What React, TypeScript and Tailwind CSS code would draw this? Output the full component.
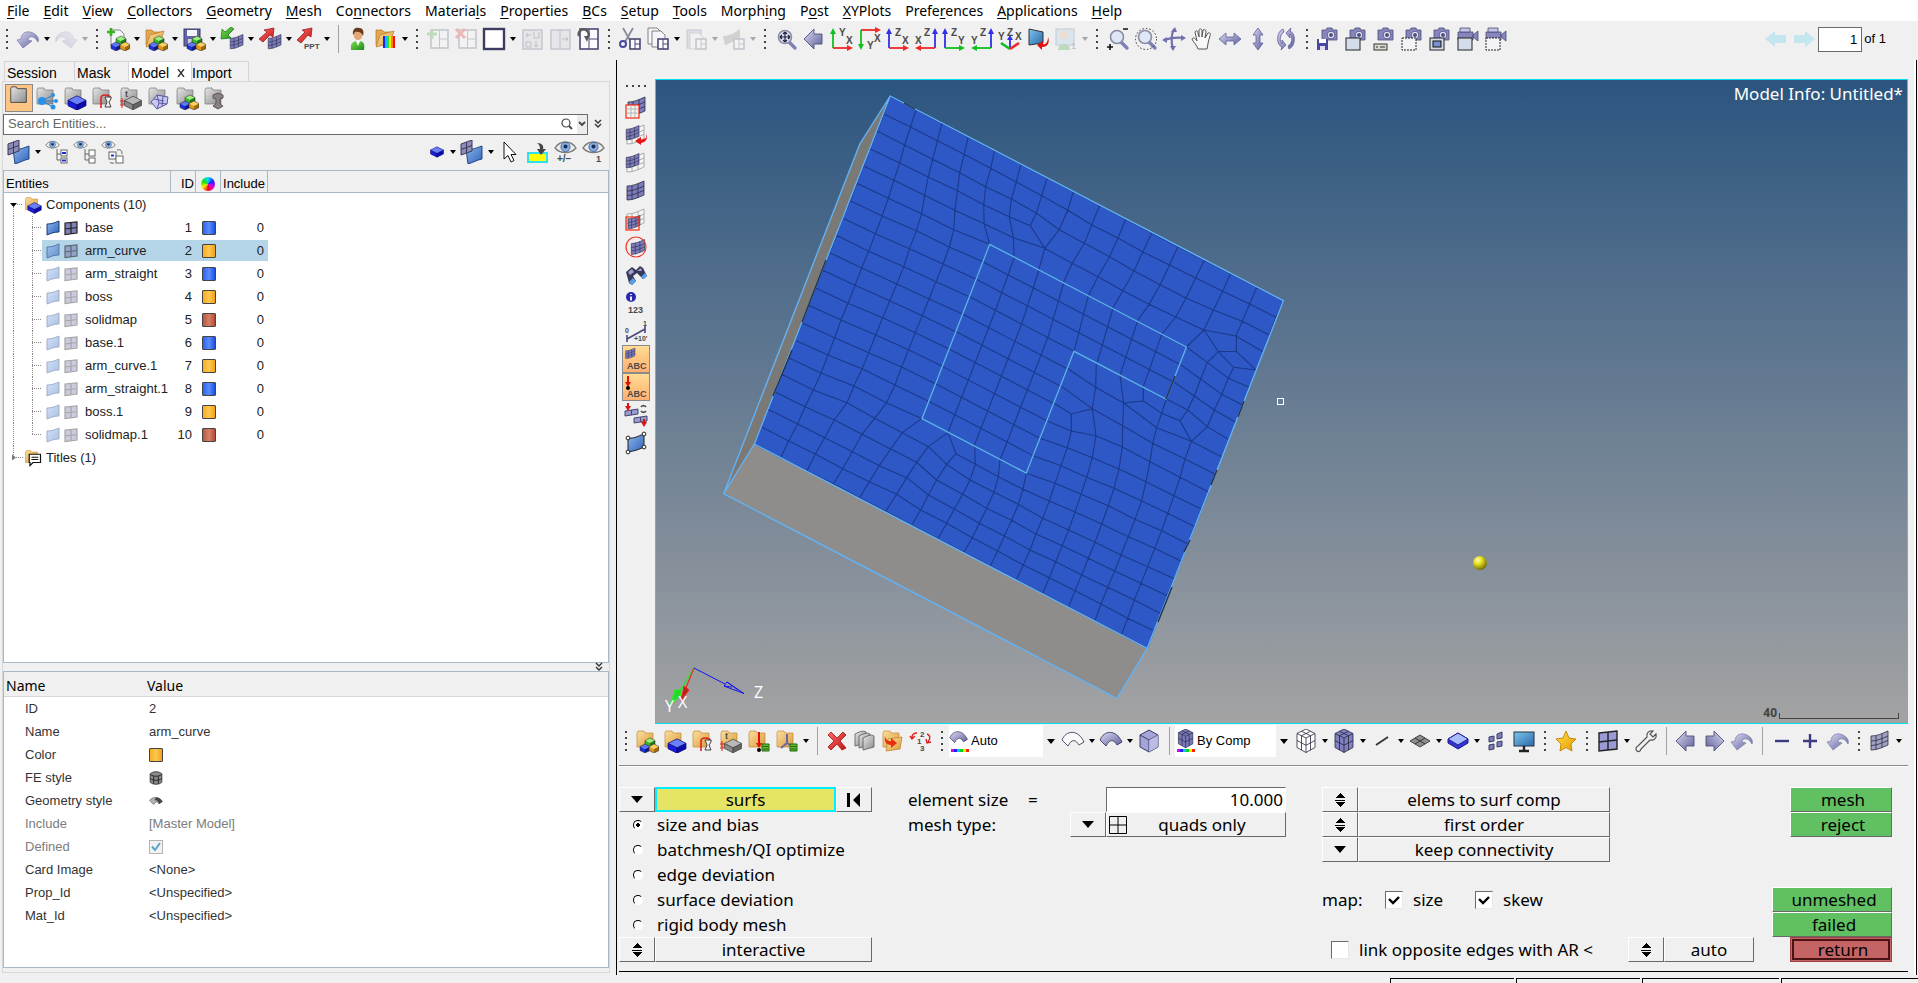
import type { ReactNode } from 'react';
import clsx from 'clsx';

type Pt = [number, number];

/* ---------- icon primitives ---------- */

function Icon({ children, faded, size = 'size-6' }: { children: ReactNode; faded?: boolean; size?: string }) {
  return (
    <svg viewBox="0 0 24 24" className={clsx('shrink-0', size, faded && 'opacity-25')} aria-hidden="true">
      {children}
    </svg>
  );
}

function Gradients() {
  const stops: [string, string, string][] = [
    ['tan', '#fbe0a0', '#dd9a3a'],
    ['gray', '#e6e6e6', '#8b8b8b'],
    ['steel', '#dcdcf4', '#5c5c98'],
    ['blue', '#8fb8f0', '#2e62b8'],
    ['screen', '#7fc4ee', '#2a6aa8'],
    ['gold', '#ffe24a', '#e89a00'],
    ['red', '#ff6a6a', '#c01414'],
    ['green', '#7be04a', '#1d8a1d'],
  ];
  return (
    <svg className="absolute size-0" aria-hidden="true">
      <defs>
        {stops.map(([id, a, b]) => (
          <linearGradient key={id} id={id} x1="0" y1="0" x2="1" y2="1">
            <stop offset="0" stopColor={a} />
            <stop offset="1" stopColor={b} />
          </linearGradient>
        ))}
        <radialGradient id="ball" cx="0.35" cy="0.3" r="0.8">
          <stop offset="0" stopColor="#ffffb0" />
          <stop offset="0.35" stopColor="#e8e020" />
          <stop offset="1" stopColor="#5c5800" />
        </radialGradient>
      </defs>
    </svg>
  );
}

function Cube({ x, y, top, left, right, s = 1 }: { x: number; y: number; top: string; left: string; right: string; s?: number }) {
  return (
    <g transform={`translate(${x} ${y}) scale(${s})`}>
      <path d="M0 -4 5 -1.5 0 1 -5 -1.5Z" fill={top} />
      <path d="M-5 -1.5 0 1V5L-5 2.5Z" fill={left} />
      <path d="M5 -1.5 0 1V5L5 2.5Z" fill={right} />
      <path d="M0 -4 5 -1.5V2.5L0 5-5 2.5V-1.5Z" fill="none" stroke="#222" strokeWidth=".5" />
    </g>
  );
}

// flat block used for components
function Gem({ x = 15, y = 16, gray, s = 1.7 }: { x?: number; y?: number; gray?: boolean; s?: number }) {
  return (
    <g transform={`translate(${x} ${y}) scale(${s})`} stroke={gray ? '#3a3a3a' : '#0a0a70'} strokeWidth=".4">
      <path d="M-5 -1.5 0 1V4L-5 1.5Z" fill={gray ? '#8a8a8a' : '#1c1ce0'} />
      <path d="M5 -1.5 0 1V4L5 1.5Z" fill={gray ? '#646464' : '#0a0ab0'} />
      <path d="M0 -4 5 -1.5 0 1 -5 -1.5Z" fill={gray ? '#b8b8b8' : '#6a80fa'} />
    </g>
  );
}

const Blocks = () => (
  <g>
    <Cube x={15} y={13} top="#9cf07c" left="#38b828" right="#1d7a18" />
    <Cube x={10} y={19} top="#5c78f8" left="#1a30d8" right="#0c1890" />
    <Cube x={19} y={19} top="#ffd060" left="#e09a18" right="#a06808" />
  </g>
);

const Folder = ({ tone = 'tan' }: { tone?: 'tan' | 'gray' }) => (
  <path d="M2 4 3 2H9L10 4H18V18H2Z" fill={tone === 'tan' ? 'url(#tan)' : 'url(#gray)'} stroke={tone === 'tan' ? '#c48a34' : '#777'} strokeWidth=".7" />
);

const OpenFolder = () => (
  <g stroke="#b87a24" strokeWidth=".7">
    <path d="M2 3H8L10 5H17V18H2Z" fill="#e0a850" />
    <path d="M2 20 6 8 20 4 16 16Z" fill="url(#tan)" />
  </g>
);

// curved mesh patch, 3 x 3 cells
const Sheet = ({ x = 0, y = 0, s = 1, fill = '#7c7cbc', line = '#2c2c48' }: { x?: number; y?: number; s?: number; fill?: string; line?: string }) => (
  <g transform={`translate(${x} ${y}) scale(${s})`} stroke={line} strokeWidth=".8">
    <path d="M3 7C9 7 13 5 20 2V16C13 19 9 21 3 21Z" fill={fill} />
    <path d="M3 12C9 12 13 10 20 7M3 16.500C9 16.500 13 14 20 11.500M8 6.700V20.700M14 4.600V18.600" fill="none" />
  </g>
);

// small element patch standing in front of a surface
const MeshOnSurf = () => (
  <g>
    <path d="M6 9C13 10 16 8 22 6V19C17 20 14 22 8 24Z" fill="url(#blue)" stroke="#173a78" strokeWidth=".9" />
    <path d="M1 4 12 0V11L1 15Z" fill="#8c8cb8" stroke="#3a3a58" />
    <path d="M6.500 2V13M1 9.500 12 5.500" stroke="#3a3a58" />
  </g>
);

const Win = ({ x = 3, y = 3, w = 17, h = 18 }: { x?: number; y?: number; w?: number; h?: number }) => (
  <g stroke="#4a4a74" strokeWidth="1.600" fill="#fafaff">
    <rect x={x} y={y} width={w} height={h} />
    <path d={`M${x + w / 2} ${y}V${y + h}M${x + w / 2} ${y + h / 2}H${x + w}`} strokeWidth="1" fill="none" />
  </g>
);

const Eye = ({ s = 1, y = 0 }: { s?: number; y?: number }) => (
  <g transform={`translate(0 ${y}) scale(${s})`}>
    <path d="M1 8C6 0 17 0 22 8 17 14 6 14 1 8Z" fill="#ececec" stroke="#7d7d7d" strokeWidth="1.400" />
    <circle cx="11.500" cy="7" r="4.600" fill="#86aee0" stroke="#3a5c94" strokeWidth=".8" />
    <circle cx="11.500" cy="6.500" r="2" fill="#1c2c54" />
  </g>
);

const Swirl = ({ flip }: { flip?: boolean }) => (
  <path
    transform={flip ? 'translate(24 0) scale(-1 1)' : undefined}
    d="M1 13 5 12C5 5 13 2 20 8 22 10 23 12 22 15 19 9 13 8 12 13L16 14 7 21Z"
    fill="url(#steel)" stroke="#7a7ab0" strokeWidth=".7"
  />
);

const FatArrow = ({ dir }: { dir: 'l' | 'r' }) => (
  <path transform={dir === 'r' ? 'translate(24 0) scale(-1 1)' : undefined} d="M2 12 12 2V7H20V17H12V22Z" fill="url(#steel)" stroke="#50507c" strokeWidth=".9" />
);

const Doc = ({ x = 3, y = 3 }: { x?: number; y?: number }) => (
  <path transform={`translate(${x} ${y})`} d="M0 0H9L13 4V16H0Z" fill="#f6f6fa" stroke="#777" strokeWidth=".9" />
);

const Lens = ({ children }: { children?: ReactNode }) => (
  <g>
    <path d="M15 15 21 21" stroke="#8080b4" strokeWidth="3.400" strokeLinecap="round" />
    <circle cx="11" cy="10" r="6.500" fill="#dfe6f6" stroke="#8c8ca4" strokeWidth="1.600" />
    {children}
  </g>
);

const Camera = () => (
  <g stroke="#4a4a78" strokeWidth=".8">
    <path d="M6 3H10L11 1H16L17 3H21V13H6Z" fill="#8686bc" />
    <circle cx="15" cy="8" r="3.800" fill="#e2e2f4" />
    <circle cx="15" cy="8" r="1.600" fill="#54548c" />
  </g>
);

const Video = () => (
  <g stroke="#4a4a78" strokeWidth=".8" fill="#8686bc">
    <path d="M2 5H17V13H2ZM17 8 22 4V14L17 10Z" />
    <path d="M4 1H14V5H4Z" fill="#c4c4e4" />
  </g>
);

const Curve = ({ fill = 'url(#steel)' }: { fill?: string }) => (
  <path d="M1 11C5 1 17 0 23 13L18 16C15 11 11 9 7 17Z" fill={fill} stroke="#3d3d64" strokeWidth=".9" />
);

const GridCube = ({ fill }: { fill: string }) => (
  <g stroke="#26263e" strokeWidth=".8">
    <path d="M12 0 21 4.500V18.500L12 23.500 3 18.500V4.500Z" fill={fill} />
    <path d="M3 4.500 12 9 21 4.500M12 9V23.500M7.500 6.700V21M16.500 6.700V21M7.500 2.300 16.500 6.700M16.500 2.300 7.500 6.700M3 11.500 12 16.300 21 11.500" fill="none" />
  </g>
);

const Spectrum = ({ y = 19 }: { y?: number }) => (
  <g>
    {['#e000e0', '#2020ff', '#00c8ff', '#00d020', '#f0f000', '#ff2000'].map((c, i) => (
      <rect key={c} x={2 + i * 3} y={y} width="3" height="3" fill={c} />
    ))}
  </g>
);

const RedDown = ({ x = 12, y = 2, l = 10 }: { x?: number; y?: number; l?: number }) => (
  <path d={`M${x - 1} ${y}h2v${l}h2l-3 5-3-5h2z`} fill="#e01010" />
);

const Bold = ({ x, y, size = 8, children }: { x: number; y: number; size?: number; children: string }) => (
  <text x={x} y={y} fontSize={size} fontWeight="700" fill="#4a4a4a" fontFamily="Liberation Sans, Arial, sans-serif">
    {children}
  </text>
);

interface AxesProps {
  corner: 'bl' | 'tl' | 'br';
  v: string;
  h: string;
}

const AXIS_COLOR: Record<string, string> = { X: '#f02828', Y: '#10c020', Z: '#3030e8' };

function Axes({ corner, v, h }: AxesProps) {
  const x0 = corner === 'br' ? 21 : 3;
  const dir = corner === 'br' ? -1 : 1;
  const y0 = corner === 'tl' ? 3 : 21;
  const up = corner === 'tl' ? 1 : -1;
  return (
    <Icon>
      <path d={`M${x0} ${y0}v${up * 15}`} stroke={AXIS_COLOR[v]} strokeWidth="1.800" />
      <path d={`M${x0 - 3} ${y0 + up * 14}h6l-3 ${up * 6}z`} fill={AXIS_COLOR[v]} />
      <path d={`M${x0} ${y0}h${dir * 15}`} stroke={AXIS_COLOR[h]} strokeWidth="1.800" />
      <path d={`M${x0 + dir * 14} ${y0 - 3}v6l${dir * 6} -3z`} fill={AXIS_COLOR[h]} />
      <Bold x={corner === 'br' ? 10 : 9} y={corner === 'tl' ? 22 : 9} size={10}>{v}</Bold>
      <Bold x={corner === 'br' ? 1 : 16} y={corner === 'tl' ? 15 : 17} size={10}>{h}</Bold>
    </Icon>
  );
}

/* ---------- toolbar parts ---------- */

const Caret = ({ faded }: { faded?: boolean }) => (
  <span className={clsx('w-2.5 flex justify-center', faded && 'opacity-30')}>
    <svg viewBox="0 0 6 4" className="w-1.5 h-1"><path d="M0 0H6L3 4Z" /></svg>
  </span>
);

function Tool({ label, caret, faded, children }: { label: string; caret?: boolean; faded?: boolean; children: ReactNode }) {
  return (
    <button type="button" aria-label={label} className="flex items-center shrink-0 h-7">
      <span className="w-7 flex justify-center">{children}</span>
      {caret && <Caret faded={faded} />}
    </button>
  );
}

const Grip = () => (
  <span className="w-3.5 shrink-0 flex flex-col items-center gap-1">
    {[0, 1, 2, 3].map(i => <span key={i} className="size-0.5 bg-[#444]" />)}
  </span>
);

const Sep = () => <span className="w-3 shrink-0 flex justify-center"><span className="w-px h-7 bg-[#a0a0a0]" /></span>;

/* ---------- menu + main toolbar ---------- */

const MENUS = [
  '_File', '_Edit', '_View', '_Collectors', '_Geometry', '_Mesh', 'Co_nnectors', 'Materia_ls', '_Properties', '_BCs',
  '_Setup', '_Tools', 'Morph_ing', 'P_ost', '_XYPlots', 'Prefe_rences', '_Applications', '_Help',
];

function MenuBar() {
  return (
    <nav className="h-[21px] shrink-0 bg-white flex items-center gap-3.5 pl-[7px] text-[14px] leading-5 font-['Noto_Sans','Open_Sans',sans-serif]">
      {MENUS.map(m => {
        const [pre, rest] = m.split('_');
        return (
          <button key={m} type="button">
            {pre}<span className="underline underline-offset-2">{rest[0]}</span>{rest.slice(1)}
          </button>
        );
      })}
    </nav>
  );
}

function MainToolbar() {
  return (
    <div className="h-9 shrink-0 flex items-center pr-8">
      <Grip />
      <Tool label="Undo" caret><Icon><Swirl /></Icon></Tool>
      <Tool label="Redo" caret faded><Icon faded><Swirl flip /></Icon></Tool>
      <Grip />
      <Tool label="New model" caret><Icon><Doc x={5} y={3} /><path d="M5 1V9M1 5H9" stroke="#38b020" strokeWidth="2.600" /><Blocks /></Icon></Tool>
      <Tool label="Open model" caret><Icon><OpenFolder /><Blocks /></Icon></Tool>
      <Tool label="Save model" caret>
        <Icon>
          <rect x="2" y="2" width="16" height="17" fill="#6464a8" stroke="#3a3a6c" />
          <rect x="5" y="3" width="10" height="6" fill="#f2f2fa" />
          <rect x="6" y="12" width="8" height="7" fill="#cfcfe6" />
          <Blocks />
        </Icon>
      </Tool>
      <Tool label="Import" caret><Icon><Sheet x={8} y={6} s={0.75} /><path d="M14 2 8 8 11 11 1 12 2 2 5 5 11 0Z" fill="url(#green)" stroke="#14701a" strokeWidth=".7" /></Icon></Tool>
      <Tool label="Export" caret><Icon><Sheet x={8} y={6} s={0.75} /><path d="M1 12 9 5 6 3 16 1 15 10 12 8 5 15Z" fill="url(#red)" stroke="#901010" strokeWidth=".7" /></Icon></Tool>
      <Tool label="Export to PPT" caret><Icon><path d="M1 13 9 5 6 3 16 1 15 10 12 8 5 16Z" fill="url(#red)" stroke="#901010" strokeWidth=".7" /><Bold x={8} y={22} size={8}>PPT</Bold></Icon></Tool>
      <Sep />
      <Tool label="User profiles"><Icon><path d="M5 23C4 16 7 14 12 14 18 14 19 17 18 23Z" fill="url(#green)" /><path d="M10 14 12 19 14 14Z" fill="#fff" /><ellipse cx="12" cy="7.500" rx="4.400" ry="5.500" fill="#e2a878" /><path d="M7 8C6 1 11 0 13 1 18 1 18 6 17 9 16 5 12 4 9 5Z" fill="#6a3a1c" /></Icon></Tool>
      <Tool label="Results" caret>
        <Icon>
          <OpenFolder />
          {['#2020ff', '#00c8ff', '#30e020', '#f8f000', '#ff8000', '#f01010'].map((c, i) => <rect key={c} x={9 + i * 2} y="9" width="2" height="12" fill={c} />)}
        </Icon>
      </Tool>
      <Grip />
      <Tool label="Add page"><Icon faded><Win x={5} /><path d="M6 2V12M1 7H11" stroke="#30a020" strokeWidth="3" /></Icon></Tool>
      <Tool label="Delete page"><Icon faded><Win x={5} /><path d="M2 2 11 11M11 2 2 11" stroke="#e01010" strokeWidth="3" /></Icon></Tool>
      <Tool label="Page layout" caret><Icon><rect x="2" y="2" width="20" height="20" fill="#fff" stroke="#3c3c60" strokeWidth="2.400" /></Icon></Tool>
      <Tool label="Swap windows"><Icon faded><rect x="3" y="3" width="19" height="19" fill="#ccccdc" stroke="#54547c" strokeWidth="1.600" /><path d="M6 8H11M6 8 8 6M6 8 8 10M14 5V11H19V5M16 14V20M14 18 16 20 18 18M6 15H11V20H6Z" fill="none" stroke="#333" /></Icon></Tool>
      <Tool label="Expand window"><Icon faded><rect x="3" y="3" width="19" height="19" fill="#ccccdc" stroke="#54547c" strokeWidth="1.600" /><path d="M12 3V22M14 12H20M18 10 20 12 18 14" fill="none" stroke="#333" /></Icon></Tool>
      <Tool label="Sync windows"><Icon><Win x={4} y={2} w={18} h={20} /><path d="M3 9A5 5 0 1 1 11 11" fill="none" stroke="#5a5a5a" strokeWidth="2.600" /><path d="M8 9 13 9 11 15Z" fill="#5a5a5a" /></Icon></Tool>
      <Grip />
      <Tool label="Cut"><Icon><path d="M5 1 13 15M15 1 7 15" stroke="#8a8a9a" strokeWidth="1.800" /><circle cx="5" cy="17" r="3" fill="none" stroke="#4848a0" strokeWidth="2" /><Win x={12} y={12} w={10} h={10} /></Icon></Tool>
      <Tool label="Copy" caret><Icon><Doc x={2} y={1} /><Doc x={6} y={4} /><Win x={12} y={12} w={10} h={10} /></Icon></Tool>
      <Tool label="Paste" caret faded><Icon faded><rect x="3" y="3" width="14" height="18" fill="#a8a8dc" stroke="#555" /><Doc x={6} y={6} /><Win x={12} y={12} w={10} h={10} /></Icon></Tool>
      <Tool label="Overlay" caret faded><Icon faded><path d="M1 9C8 9 12 6 18 2V11C12 13 8 17 3 18Z" fill="#777" /><Win x={12} y={12} w={10} h={10} /></Icon></Tool>
      <Grip />
      <Tool label="Fit"><Icon><Lens><path d="M11 5V15M6 10H16M11 5 9 7M11 5 13 7M11 15 9 13M11 15 13 13M6 10 8 8M6 10 8 12M16 10 14 8M16 10 14 12" stroke="#20203c" strokeWidth="1.200" /></Lens></Icon></Tool>
      <Tool label="Previous view"><Icon><FatArrow dir="l" /></Icon></Tool>
      <Tool label="XY top view"><Axes corner="bl" v="Y" h="X" /></Tool>
      <Tool label="XY bottom view"><Axes corner="tl" v="Y" h="X" /></Tool>
      <Tool label="XZ left view"><Axes corner="bl" v="Z" h="X" /></Tool>
      <Tool label="XZ right view"><Axes corner="br" v="Z" h="X" /></Tool>
      <Tool label="YZ rear view"><Axes corner="bl" v="Z" h="Y" /></Tool>
      <Tool label="YZ front view"><Axes corner="br" v="Z" h="Y" /></Tool>
      <Tool label="Isometric view">
        <Icon>
          <path d="M12 21V11" stroke="#3030e8" strokeWidth="1.800" /><path d="M9 13 12 8 15 13Z" fill="#3030e8" />
          <path d="M12 22 3 16" stroke="#10c020" strokeWidth="2.600" /><path d="M12 22 21 16" stroke="#f02828" strokeWidth="2.600" />
          <Bold x={0} y={13} size={10}>Y</Bold><Bold x={9} y={9} size={10}>Z</Bold><Bold x={17} y={13} size={10}>X</Bold>
        </Icon>
      </Tool>
      <Tool label="Capture view"><Icon><path d="M3 2 17 5V16L3 18Z" fill="url(#screen)" stroke="#333" /><path d="M22 10C22 17 18 18 17 17V14L11 18 16 23V20C22 20 24 15 22 10Z" fill="#e01010" /></Icon></Tool>
      <Tool label="Saved views" caret faded><Icon faded><rect x="2" y="2" width="18" height="16" fill="#9ac8e8" stroke="#557" /><circle cx="10" cy="8" r="4" fill="#e2a878" /><path d="M4 23C4 15 16 15 16 23Z" fill="#2a9a2a" /><Bold x={17} y={22} size={9}>1</Bold></Icon></Tool>
      <Grip />
      <Tool label="Zoom in or out"><Icon><Lens /><path d="M17 2H22M1 20H7M4 17V23" stroke="#111" strokeWidth="1.600" /></Icon></Tool>
      <Tool label="Circle zoom"><Icon><Lens /><circle cx="12" cy="12" r="10.500" fill="none" stroke="#333" strokeDasharray="1.500 2" /></Icon></Tool>
      <Tool label="Rotate"><Icon><path d="M12 2C9 8 9 15 11 22M2 13C8 11 15 10 22 11" fill="none" stroke="#7070ac" strokeWidth="2.200" /><path d="M9 5 13 0 15 5ZM8 19 14 19 11 24ZM5 10 5 16 0 13ZM19 8V14L24 11Z" fill="#7070ac" /></Icon></Tool>
      <Tool label="Pan"><Icon><path d="M8 22C7 18 3 15 2 12 3 10 5 11 7 14L5 5C6 3 8 4 8 6L9 10 9 3C10 1 12 2 12 4V10L13 3C15 2 16 3 16 5L15 11 18 6C20 5 21 7 20 9 18 14 18 18 17 22Z" fill="#f8f8f8" stroke="#555" strokeWidth="1" /></Icon></Tool>
      <Tool label="Pan horizontally"><Icon><path d="M1 12 8 6V10H16V6L23 12 16 18V14H8V18Z" fill="url(#steel)" stroke="#6060a0" strokeWidth=".8" /></Icon></Tool>
      <Tool label="Pan vertically"><Icon><path d="M12 1 17 8H14V16H17L12 23 7 16H10V8H7Z" fill="url(#steel)" stroke="#6060a0" strokeWidth=".8" /></Icon></Tool>
      <Tool label="Spin"><Icon><path d="M9 2C2 5 2 18 8 20L7 23 12 18 8 13 8 17C5 14 6 7 10 5ZM15 22C22 19 22 6 16 4L17 1 12 6 16 11 16 7C19 10 18 17 14 19Z" fill="url(#steel)" stroke="#6060a0" strokeWidth=".8" /></Icon></Tool>
      <Grip />
      <Tool label="Save image"><Icon><Camera /><rect x="1" y="12" width="11" height="11" fill="#4848a0" /><rect x="3" y="12" width="7" height="4" fill="#fff" /><rect x="4" y="19" width="5" height="4" fill="#dde" /></Icon></Tool>
      <Tool label="Capture window"><Icon><Camera /><rect x="2" y="11" width="14" height="12" fill="#d4dcea" stroke="#222" /></Icon></Tool>
      <Tool label="Capture toolbar"><Icon><Camera /><rect x="2" y="17" width="13" height="6" fill="#d8dcd0" stroke="#333" /><path d="M4 20H6M8 20H13" stroke="#333" /></Icon></Tool>
      <Tool label="Capture area"><Icon><Camera /><rect x="2" y="11" width="14" height="12" fill="#f4f4f8" stroke="#222" strokeDasharray="2 1" /></Icon></Tool>
      <Tool label="Capture graphics"><Icon><Camera /><rect x="2" y="11" width="14" height="12" fill="#d4dcea" stroke="#222" /><rect x="5" y="14" width="8" height="6" fill="#7890d0" stroke="#111" /></Icon></Tool>
      <Tool label="Record window"><Icon><Video /><rect x="2" y="11" width="14" height="12" fill="#d4dcea" stroke="#222" /></Icon></Tool>
      <Tool label="Record area"><Icon><Video /><rect x="2" y="11" width="14" height="12" fill="#f4f4f8" stroke="#222" strokeDasharray="2 1" /></Icon></Tool>
      <div className="ml-auto flex items-center font-['Liberation_Sans',Arial,sans-serif] text-[13px]">
        {(['l', 'r'] as const).map(d => (
          <button key={d} type="button" aria-label={d === 'l' ? 'Previous page' : 'Next page'} className="w-7 flex justify-center">
            <Icon><path transform={d === 'r' ? 'translate(24 0) scale(-1 1)' : undefined} d="M1 12 11 4V8H22V16H11V20Z" fill="#c4e6ee" /></Icon>
          </button>
        ))}
        <input aria-label="Page" defaultValue="1" className="w-11 h-[25px] mr-0.5 bg-white border border-[#6a6a6a] text-right pr-1" />
        <span>of 1</span>
      </div>
    </div>
  );
}

/* ---------- model browser ---------- */

const COLORS = {
  blue: 'bg-linear-to-r from-[#2c62f0] via-[#5c8cff] to-[#1c4ee0]',
  orange: 'bg-linear-to-r from-[#f8ac1c] via-[#ffc850] to-[#f0a010]',
  brown: 'bg-linear-to-r from-[#b45840] via-[#d88068] to-[#b04c34]',
};

type Color = keyof typeof COLORS;

const COMPONENTS: { id: number; name: string; color: Color }[] = [
  { id: 1, name: 'base', color: 'blue' },
  { id: 2, name: 'arm_curve', color: 'orange' },
  { id: 3, name: 'arm_straight', color: 'blue' },
  { id: 4, name: 'boss', color: 'orange' },
  { id: 5, name: 'solidmap', color: 'brown' },
  { id: 6, name: 'base.1', color: 'blue' },
  { id: 7, name: 'arm_curve.1', color: 'orange' },
  { id: 8, name: 'arm_straight.1', color: 'blue' },
  { id: 9, name: 'boss.1', color: 'orange' },
  { id: 10, name: 'solidmap.1', color: 'brown' },
];

const Swatch = ({ color }: { color: Color }) => (
  <span className={clsx('block size-3.5 border border-[#444] rounded-[1px]', COLORS[color])} />
);

const Guide = ({ last }: { last: boolean }) => (
  <svg className="w-[38px] h-[23px] shrink-0" viewBox="0 0 38 23" aria-hidden="true">
    <path d={`M9.500 0V23M28.500 0V${last ? 11 : 23}M28 11.500H37`} stroke="#888" strokeDasharray="1 1" fill="none" />
  </svg>
);

function EntityTree() {
  const th = 'border-r border-b border-[#aab7c4] font-normal h-[22px] p-0 pt-1';
  return (
    <div className="flex-1 min-h-0 bg-white border border-[#aab7c4]">
      <table className="w-full table-fixed border-separate border-spacing-0">
        <thead className="bg-[#f0f0f0]">
          <tr>
            <th className={clsx(th, 'w-[167px] text-left pl-0.5')}>Entities</th>
            <th className={clsx(th, 'w-[25px] text-right pr-px')}>ID</th>
            <th className={clsx(th, 'w-[25px]')} aria-label="Color">
              <span className="block mx-auto size-3.5 rounded-full bg-[conic-gradient(#00e0ff,#2020ff,#e000e0,#ff0020,#f8f000,#10e010,#00e0ff)]" />
            </th>
            <th className={clsx(th, 'w-[47px]')}>Include</th>
            <th className="border-b border-[#aab7c4]" />
          </tr>
        </thead>
        <tbody className="text-[#222]">
          <tr>
            <td colSpan={5} className="p-0">
              <div className="flex items-center h-[23px]">
                <svg className="w-5 h-[23px]" viewBox="0 0 20 23"><path d="M6 10H13L9.500 14Z" /><path d="M9.500 14V23M13 11.500H19" stroke="#888" strokeDasharray="1 1" /></svg>
                <Icon size="size-[18px]"><Folder /><Gem x={14} y={16} s={1.8} /></Icon>
                <span className="pl-1">Components (10)</span>
              </div>
            </td>
          </tr>
          {COMPONENTS.map((c, i) => {
            const cell = clsx('h-[21px] flex items-center', c.id === 2 && 'bg-[#b4d5e8]');
            return (
              <tr key={c.id}>
                <td className="p-0">
                  <div className="flex items-center h-[23px]">
                    <Guide last={i === COMPONENTS.length - 1} />
                    <div className={clsx(cell, 'flex-1 gap-1 pl-[3px] whitespace-nowrap')}>
                      <span className={clsx('flex gap-0.5 w-9', c.id === 2 ? 'opacity-60' : c.id > 1 && 'opacity-40')}>
                        <svg viewBox="0 0 16 16" className="size-4"><path d="M2 4C7 4 9 3 14 1V12C9 12 7 13 2 15Z" fill="url(#blue)" stroke="#173a78" /></svg>
                        <svg viewBox="0 0 16 16" className="size-4"><path d="M2 3 14 2V13L2 14.500ZM8 2V14M2 9 14 7.500" fill="#8080b4" stroke="#222" strokeWidth="1.200" /></svg>
                      </span>
                      {c.name}
                    </div>
                  </div>
                </td>
                <td className="p-0"><div className={clsx(cell, 'justify-end pr-1')}>{c.id}</div></td>
                <td className="p-0"><div className={clsx(cell, 'justify-center')}><Swatch color={c.color} /></div></td>
                <td className="p-0"><div className={clsx(cell, 'justify-end pr-1')}>0</div></td>
                <td />
              </tr>
            );
          })}
          <tr>
            <td colSpan={5} className="p-0">
              <div className="flex items-center h-[23px]">
                <svg className="w-5 h-[23px]" viewBox="0 0 20 23"><path d="M9.500 0V11M10 11.500H19" stroke="#888" strokeDasharray="1 1" /><path d="M8 8.500 12 11.500 8 14.500Z" fill="#777" /></svg>
                <Icon size="size-[18px]"><Folder /><path d="M7 7H22V18H12L8 22V18H7Z" fill="#fff" stroke="#111" strokeWidth="1.600" /><path d="M10 11H19M10 14H19" stroke="#111" strokeWidth="1.400" /></Icon>
                <span className="pl-1">Titles (1)</span>
              </div>
            </td>
          </tr>
        </tbody>
      </table>
    </div>
  );
}

const PROPS: { name: string; value: ReactNode; muted?: boolean }[] = [
  { name: 'ID', value: '2' },
  { name: 'Name', value: 'arm_curve' },
  { name: 'Color', value: <Swatch color="orange" /> },
  { name: 'FE style', value: <Icon size="size-3.5"><path d="M2 5C6 0 18 0 22 5V19C18 24 6 24 2 19Z" fill="#8a8a8a" stroke="#333" strokeWidth="1.500" /><path d="M2 6C8 10 16 10 22 6M2 13C8 17 16 17 22 13M8 9V22M16 9V22" stroke="#222" strokeWidth="1.600" fill="none" /></Icon> },
  { name: 'Geometry style', value: <Icon size="size-3.5"><path d="M1 11C6 4 18 4 23 13L17 17C15 12 12 12 8 18Z" fill="#b4b4b4" stroke="#444" /><path d="M12 6C18 6 21 9 23 13L17 17C16 12 14 10 9 11Z" fill="#444" /></Icon> },
  { name: 'Include', value: '[Master Model]', muted: true },
  {
    name: 'Defined',
    value: (
      <span className="relative block size-3.5">
        <input type="checkbox" aria-label="Defined" defaultChecked disabled className="block size-3.5 appearance-none bg-[#f2f2f2] border border-[#b4b4b4]" />
        <svg viewBox="0 0 14 14" className="absolute inset-0 pointer-events-none"><path d="M3 6.500 6 10 11 3" fill="none" stroke="#5aa4cc" strokeWidth="2" /></svg>
      </span>
    ),
    muted: true,
  },
  { name: 'Card Image', value: '<None>' },
  { name: 'Prop_Id', value: '<Unspecified>' },
  { name: 'Mat_Id', value: '<Unspecified>' },
];

function PropertyTable() {
  return (
    <div className="h-[297px] shrink-0 bg-white border border-[#aab7c4]">
      <table className="w-full table-fixed border-separate border-spacing-0">
        <thead className="bg-[#f0f0f0] font-['Noto_Sans','Open_Sans',sans-serif] text-[14px]">
          <tr className="text-left">
            <th className="w-[143px] h-[25px] p-0 pt-1 pl-0.5 font-normal border-b border-[#d4d8dc]">Name</th>
            <th className="h-[25px] p-0 pt-1 font-normal border-b border-[#d4d8dc]">Value</th>
          </tr>
        </thead>
        <tbody>
          {PROPS.map(p => (
            <tr key={p.name} className={p.muted ? 'text-[#7c7c7c]' : 'text-[#333]'}>
              <td className="h-[23px] p-0 pl-[21px]">{p.name}</td>
              <td className="h-[23px] p-0 pl-0.5">{p.value}</td>
            </tr>
          ))}
        </tbody>
      </table>
    </div>
  );
}

const Chevrons = () => (
  <svg viewBox="0 0 8 10" className="w-2 h-2.5"><path d="M1 1 4 4 7 1M1 5 4 8 7 5" fill="none" stroke="#333" strokeWidth="1.400" /></svg>
);

function EyeTree({ variant }: { variant: number }) {
  return (
    <Icon>
      <Eye s={0.65} y={0} />
      {variant < 2 ? (
        <g>
          <path d="M12 9V20H16M12 14H16" fill="none" stroke="#666" />
          <rect x="16" y="10" width="6" height="6" fill="#fff" stroke="#666" /><rect x="16" y="18" width="6" height="5" fill="#fff" stroke="#666" />
          {variant === 0 && <path d="M17 13H21M17 20.500H21" stroke="#2030d8" strokeWidth="2" />}
        </g>
      ) : (
        <g>
          <rect x="8" y="12" width="7" height="7" fill="#fff" stroke="#666" /><path d="M10 15.500H13" stroke="#2030d8" strokeWidth="2" />
          <rect x="15" y="16" width="7" height="7" fill="#fff" stroke="#666" /><path d="M16 10C20 9 21 11 21 14M9 22C10 24 12 23 13 23" fill="none" stroke="#666" />
        </g>
      )}
    </Icon>
  );
}

function Browser() {
  const tab = 'h-5 flex items-center border-t border-r border-[#d4d4d4] pt-0.5';
  return (
    <aside className="w-[617px] shrink-0 mt-[3px] border-r border-black pl-0.5 pr-1.5 flex flex-col font-['Liberation_Sans',Arial,sans-serif] text-[13px] leading-4">
      <div className="flex items-end text-[14px] h-[21px] pl-0.5">
        <button type="button" className={clsx(tab, 'border-l pl-0.5 w-[71px]')}>Session</button>
        <button type="button" className={clsx(tab, 'pl-0.5 w-[54px]')}>Mask</button>
        <div className={clsx(tab, 'bg-white pl-0.5 w-[63px] justify-between pr-1.5')}>
          <button type="button">Model</button>
          <button type="button" aria-label="Close Model">
            <svg viewBox="0 0 8 8" className="size-2"><path d="M1 0 7 8M7 0 1 8" stroke="#333" strokeWidth="1.400" /></svg>
          </button>
        </div>
        <button type="button" className={clsx(tab, 'w-[57px]')}>Import</button>
      </div>
      <div className="flex-1 min-h-0 border border-[#d8d8d8] flex flex-col pb-1 mb-0.5">
        <div className="flex h-8 items-center pl-0.5">
          <button type="button" aria-label="Model view" className="size-7 border border-[#8a8a8a] bg-[#ffc484] flex justify-center items-start"><Icon size="size-[22px]"><path d="M3 4 4 2H9L10 4H20V19H3Z" fill="url(#gray)" stroke="#444" /></Icon></button>
          <Tool label="Assembly"><Icon><Folder tone="gray" /><path d="M7 15 18 9M7 15H20M7 15 18 21" stroke="#2878c8" strokeWidth="1" />{([[7, 15, 4], [18, 9, 2], [21, 15, 2], [18, 21, 2.5]] as const).map(([x, y, r]) => <circle key={y} cx={x} cy={y} r={r} fill="#2890e8" />)}</Icon></Tool>
          <Tool label="Components view"><Icon><Folder tone="gray" /><Gem x={14} y={17} s={1.8} /></Icon></Tool>
          <Tool label="Materials view"><Icon><Folder tone="gray" /><path d="M10 22V12C10 8 18 8 20 12" fill="none" stroke="#e02020" strokeWidth="1.600" /><path d="M14 11H20V13L18 16 20 21H14L16 16Z" fill="#eee" stroke="#444" /></Icon></Tool>
          <Tool label="Properties view"><Icon><Folder tone="gray" /><Gem x={14} y={17} s={1.7} gray /><Bold x={6} y={11} size={9}>t</Bold><path d="M3 12V22M1 15H5M1 19H5" stroke="#e02020" /></Icon></Tool>
          <Tool label="Groups view"><Icon><Folder tone="gray" /><path d="M4 16 10 9 21 11 20 18 10 23Z" fill="#c8c8ee" stroke="#5858a0" /><path d="M10 9 12 17 10 23M12 17 20 18M16 10 15 20M7 13 17 15" stroke="#5858a0" fill="none" /></Icon></Tool>
          <Tool label="Includes view"><Icon><Folder tone="gray" /><Blocks /></Icon></Tool>
          <Tool label="Connectors view"><Icon><Folder tone="gray" /><path d="M10 9 15 7 20 9V12L17 13V18L20 20 15 23 10 20 13 18V13L10 12Z" fill="#8a8282" stroke="#5a5454" /></Icon></Tool>
        </div>
        <div className="flex items-center h-5 gap-1.5">
          <div className="w-[585px] h-[21px] flex items-center bg-white border border-[#6a6a6a]">
            <input aria-label="Search entities" placeholder="Search Entities..." className="flex-1 pl-1 outline-none placeholder:text-[#666]" />
            <svg viewBox="0 0 12 12" className="size-3"><circle cx="5" cy="5" r="4" fill="none" stroke="#444" strokeWidth="1.200" /><path d="M8 8 11 11" stroke="#444" strokeWidth="1.800" /></svg>
            <span className="w-2.5 h-full flex items-center justify-center bg-[#ececec] ml-1"><svg viewBox="0 0 8 6" className="w-2 h-1.5"><path d="M1 1 4 4 7 1" fill="none" stroke="#444" strokeWidth="1.800" /></svg></span>
          </div>
          <button type="button" aria-label="More search options"><Chevrons /></button>
        </div>
        <div className="flex items-center h-9 pl-0.5">
          <Tool label="Entity display" caret><Icon><MeshOnSurf /></Icon></Tool>
          <Tool label="Show all"><EyeTree variant={0} /></Tool>
          <Tool label="Hide all"><EyeTree variant={1} /></Tool>
          <Tool label="Reverse"><EyeTree variant={2} /></Tool>
          <div className="ml-auto flex pr-px">
            <Tool label="Component selector" caret><Icon><Gem x={15} y={12} s={1.3} /></Icon></Tool>
            <Tool label="Display selector" caret><Icon><MeshOnSurf /></Icon></Tool>
            <Tool label="Pick"><Icon><path d="M6 2V19L10 15.500 13 22 16 20.500 13 14.500H18Z" fill="#fff" stroke="#111" /></Icon></Tool>
            <Tool label="Add to panel"><Icon><rect x="2" y="13" width="19" height="9" fill="#ff0" stroke="#30e0f0" strokeWidth="2" /><path d="M11 3C16 3 18 6 17 9H20L15 15 11 9H14C14 6 13 4 11 3Z" fill="#444" /></Icon></Tool>
            <Tool label="Show or hide"><Icon><Eye /><Bold x={3} y={22} size={10}>+/−</Bold></Icon></Tool>
            <Tool label="Isolate"><Icon><Eye /><Bold x={14} y={22} size={9}>1</Bold></Icon></Tool>
          </div>
        </div>
        <EntityTree />
        <div className="h-2 flex justify-end items-center pr-1.5"><Chevrons /></div>
        <PropertyTable />
      </div>
    </aside>
  );
}

/* ---------- graphics area ---------- */

// Nodes of the structured blocks, one array per column.
const upperLeft: Pt[][] = [
  [[460, 48], [443, 102], [425, 153], [405, 206], [388, 258], [370, 310], [352, 362], [331, 414], [315, 466], [297, 518], [278, 571], [259, 624], [240, 676], [222, 729], [203, 781], [185, 833]],
  [[530, 89], [515, 141], [499, 195], [486, 249], [470, 301], [455, 355], [438, 408], [420, 461], [402, 514], [383, 564], [365, 616], [346, 670], [327, 720], [310, 773], [292, 825], [273, 879]],
  [[600, 130], [588, 182], [575, 238], [563, 291], [553, 346], [545, 401], [531, 452], [512, 506], [497, 560], [478, 612], [459, 662], [440, 713], [421, 765], [402, 818], [384, 866], [362, 918]],
  [[671, 171], [660, 223], [648, 278], [642, 332], [635, 391], [632, 449], [620, 501], [603, 552], [584, 605], [565, 657], [547, 707], [528, 758], [510, 809], [491, 861], [473, 915], [450, 968]],
  [[742, 212], [732, 265], [718, 320], [713, 374], [714, 431], [729, 493], [711, 545], [692, 598], [674, 650], [656, 702], [637, 755], [619, 807], [601, 859], [582, 911], [564, 964], [546, 1016]],
];

const upperRight: Pt[][] = [
  [[742, 212], [732, 265], [718, 320]],
  [[813, 253], [801, 306], [788, 357]],
  [[884, 294], [870, 347], [855, 399]],
  [[955, 335], [940, 391], [917, 449]],
  [[1026, 376], [1005, 435], [985, 490]],
  [[1097, 418], [1076, 474], [1053, 530]],
  [[1167, 459], [1143, 516], [1119, 573]],
  [[1238, 500], [1215, 555], [1190, 614]],
  [[1309, 541], [1286, 594], [1260, 654]],
  [[1380, 581], [1359, 634], [1334, 690]],
  [[1451, 622], [1432, 672], [1412, 724]],
  [[1523, 662], [1503, 712], [1485, 765]],
];

const upperLinks =
  'M713 374 782 410 839 437 878 505 952 550 1022 590 1089 632 1160 673 1232 711 1308 750 1395 768 1468 815' +
  'M714 431 793 473 878 505M788 357 782 410 793 473 795 532M855 399 839 437M917 449 878 505 862 569' +
  'M985 490 952 550 929 606M1053 530 1022 590 996 647M1119 573 1089 632 1062 684M1190 614 1160 673 1128 723' +
  'M1260 654 1232 711 1195 762M1334 690 1308 750M1412 724 1395 768';

const lower: Pt[][] = [
  [[-235, 223], [-256, 275], [-276, 328], [-296, 380], [-317, 432]],
  [[-140, 270], [-165, 320], [-187, 372], [-214, 423], [-238, 473]],
  [[-39, 308], [-77, 360], [-106, 413], [-134, 462], [-159, 512]],
  [[44, 355], [6, 403], [-23, 455], [-52, 506], [-80, 552]],
  [[127, 398], [92, 447], [58, 497], [28, 545], [-1, 593]],
  [[205, 440], [170, 487], [140, 533], [110, 583], [77, 634]],
  [[260, 493], [230, 540], [205, 585], [182, 630], [155, 675]],
  [[330, 540], [308, 583], [283, 627], [260, 670], [234, 716]],
  [[402, 577], [380, 625], [358, 670], [337, 713], [312, 757]],
  [[475, 613], [455, 661], [433, 708], [413, 753], [391, 798]],
  [[548, 655], [528, 702], [510, 750], [490, 795], [469, 839]],
  [[626, 690], [607, 737], [587, 785], [568, 833], [548, 880]],
  [[705, 727], [685, 775], [665, 825], [645, 872], [626, 921]],
  [[783, 765], [764, 813], [743, 862], [723, 912], [705, 962]],
  [[863, 800], [843, 850], [823, 900], [803, 955], [784, 1004]],
  [[943, 836], [923, 888], [903, 941], [882, 993], [862, 1045]],
];

const lowerRight: Pt[][] = [
  [[560, 362], [540, 415], [520, 467], [499, 520], [489, 568], [475, 613]],
  [[634, 393], [622, 443], [603, 497], [585, 550], [568, 603], [548, 655]],
  [[708, 407], [697, 473], [680, 532], [663, 583], [645, 636], [626, 690]],
  [[787, 441], [777, 507], [762, 565], [745, 617], [725, 672], [705, 727]],
  [[870, 485], [858, 545], [845, 603], [825, 658], [805, 710], [783, 765]],
  [[960, 532], [942, 587], [923, 640], [905, 692], [884, 745], [863, 800]],
  [[1046, 576], [1025, 628], [1005, 680], [984, 732], [964, 784], [943, 836]],
];

const lowerLinks =
  'M-117 219-140 270M-18 258-39 308M80 308 44 355M185 356 127 398M264 398 205 440M264 398 288 461 260 493' +
  'M288 461 346 493 415 530 489 568M344 438 346 493 330 540M420 479 415 530 402 577' +
  'M581 309 634 342 697 326M634 342V393M601 257 697 326 788 377 878 430 975 477 1066 523' +
  'M621 205 707 262 791 309 890 383 994 424 1086 471M709 190 707 262 697 326 708 407' +
  'M780 226 791 309 788 377 787 441M791 309 850 303V262M850 303 905 340 960 362 994 424 1042 380' +
  'M919 297 905 340 890 383 878 430 870 485M994 424 975 477 960 532M919 297 983 330 1042 380 1107 419M983 330 960 362' +
  'M940 245 1003 288 1063 330 1127 367M960 193 1022 237 1085 283 1148 315M979 141 1042 187 1105 235 1168 262' +
  'M979 141 1032 90 1075 155 1129 154V107M1129 154 1188 210 1121 202 1075 155 1042 187M1121 202 1105 235' +
  'M1042 187 1022 237 1003 288 983 330M1105 235 1085 283 1063 330 1042 380';

const line = (pts: Pt[]) => 'M' + pts.map(p => p.join(' ')).join('L');

function blockPath(cols: Pt[][]) {
  const rows = cols[0].map((_, r) => cols.map(c => c[r]));
  return [...cols, ...rows].map(line).join('');
}

// Bilinear grid between four corners: a-b is the first row, d-c the last.
function patchPath(a: Pt, b: Pt, c: Pt, d: Pt, nu: number, nv: number) {
  const mix = (p: Pt, q: Pt, t: number): Pt => [p[0] + (q[0] - p[0]) * t, p[1] + (q[1] - p[1]) * t];
  let out = '';
  for (let i = 0; i <= nu; i++) out += line([mix(a, b, i / nu), mix(d, c, i / nu)]);
  for (let j = 0; j <= nv; j++) out += line([mix(a, d, j / nv), mix(b, c, j / nv)]);
  return out;
}

const P1: Pt = [989.7, 244.3];
const P2: Pt = [1186.4, 347];
const P3: Pt = [1166.1, 399];
const P4: Pt = [1074, 351.3];
const P5: Pt = [1026.3, 473];
const P6: Pt = [922, 418.7];
const TOP_MID: Pt = [1088.4, 295.7];
const LEFT_MID: Pt = [969.3, 296.6];

function Model() {
  return (
    <svg viewBox="656 80 1251 642" preserveAspectRatio="xMinYMin meet" className="absolute inset-0 size-full" role="img" aria-label="Meshed block">
      <path d="M890.200 96 859.800 144 723.700 493.700 754.400 444Z" fill="#7b7976" />
      <path d="M754.400 444 1147.200 648.300 1116.900 698.300 723.700 493.700Z" fill="#8f8d8b" />
      <path d="M890.200 96 1283.400 300.700 1147.200 648.300 754.400 444Z" fill="#2d58c6" />
      <g fill="none" stroke="#1d3a8a" strokeWidth="1.100">
        <g transform="translate(720 80) scale(.3699 .33333)">
          <path vectorEffect="non-scaling-stroke" d={blockPath(upperLeft) + blockPath(upperRight) + upperLinks} />
        </g>
        <g transform="translate(860 300) scale(.33333)">
          <path vectorEffect="non-scaling-stroke" d={blockPath(lower) + blockPath(lowerRight) + lowerLinks} />
        </g>
        <path d={patchPath(P1, TOP_MID, P4, LEFT_MID, 4, 3) + patchPath(TOP_MID, P2, P3, P4, 4, 3) + patchPath(LEFT_MID, P4, P5, P6, 4, 7)} />
      </g>
      <g fill="none" stroke="#62b2f4" strokeWidth="1.400">
        <path d="M890.200 96 1283.400 300.700 1147.200 648.300 754.400 444ZM890.200 96 859.800 144 723.700 493.700 1116.900 698.300 1147.200 648.300M723.700 493.700 754.400 444" />
        <path d={line([P1, P2, P3, P4, P5, P6]) + 'Z'} stroke="#5cb4ea" />
        <path d="M1175 376 1166 399M826 260 802 322M792 350 773 396M1244 401 1238 417M1217 470 1211 485M1190 540 1184 552M1172 587 1158 622M904 103 915 109" stroke="#23324a" />
      </g>
      <g fill="none">
        <path d="M694 668 673 703" stroke="#30e030" strokeWidth="1.400" />
        <path d="M675 690 682 689 681 695 670 705Z" fill="#28d828" stroke="#30f030" />
        <path d="M694 668 681 700" stroke="#e03020" strokeWidth="1.200" />
        <path d="M684 686 689 690 686 694 681 701Z" fill="#b02818" stroke="#ff2020" />
        <path d="M694 668 725 684M727 682 724 686 744 693.500ZM727 682 738 690M724 686 732 687" stroke="#1414f0" />
      </g>
      <g fill="#fff" fontSize="16" fontFamily="Open Sans, Noto Sans, sans-serif">
        <text x="754" y="698">Z</text>
        <text x="678" y="708">X</text>
        <text x="665" y="712">Y</text>
      </g>
      <rect x="1277.500" y="398.500" width="6" height="6" fill="none" stroke="#fff" />
      <ellipse cx="1480" cy="563" rx="7" ry="7" fill="url(#ball)" />
    </svg>
  );
}

function Viewport() {
  return (
    <div className="relative flex-1 border border-[#00e0f0] bg-linear-to-b from-[#2b557f] to-[#a3a3a3] overflow-hidden">
      <Model />
      <p className="absolute top-1 right-1 text-white text-[17px] leading-5 font-['Noto_Sans',sans-serif]">Model Info: Untitled*</p>
      <div className="absolute bottom-0.5 right-2 flex items-end text-[#444] font-bold text-[12px] leading-4 font-['Noto_Sans',sans-serif]">
        40<span className="w-[120px] h-1.5 ml-0.5 mb-0.5 border border-t-0 border-[#444]" />
      </div>
    </div>
  );
}

function SideToolbar() {
  const on = 'size-7 border border-[#8a8a8a] bg-linear-to-b from-[#ffdc94] to-[#ffb070] flex justify-center items-center';
  return (
    <div className="w-[38px] shrink-0 flex flex-col items-center">
      <span className="h-3.5 flex items-center gap-1">{[0, 1, 2, 3].map(i => <span key={i} className="size-0.5 bg-[#444]" />)}</span>
      <Tool label="Mask"><Icon><Sheet x={1} /><rect x="2" y="10" width="13" height="13" fill="#f2f2f2" stroke="#f02a10" strokeWidth="1.200" /><path d="M3 14H14M3 18H14M7 11V22M11 11V22" stroke="#aaa" strokeWidth=".8" /></Icon></Tool>
      <Tool label="Unmask adjacent"><Icon><Sheet fill="#f4f4f4" line="#999" /><Sheet s={0.75} y={1} /><path d="M22 11V15L17 17V14L11 18 17 22V20C22 19 24 16 22 11Z" fill="#e81010" /></Icon></Tool>
      <Tool label="Unmask more"><Icon><Sheet fill="#f4f4f4" line="#999" /><Sheet s={0.75} y={1} /></Icon></Tool>
      <Tool label="Unmask all"><Icon><Sheet /></Icon></Tool>
      <Tool label="Mask outside"><Icon><Sheet fill="#f4f4f4" line="#999" /><Sheet x={2} y={7} s={0.7} /><rect x="2" y="10" width="13" height="13" fill="none" stroke="#f02a10" strokeWidth="1.200" /></Icon></Tool>
      <Tool label="Spherical clipping"><Icon><Sheet x={5} y={3} s={0.78} /><circle cx="12" cy="12" r="10" fill="none" stroke="#f03a28" strokeWidth="1.200" /></Icon></Tool>
      <Tool label="Find"><Icon><path d="M2 9 8 4 12 7 16 3 19 5 23 13 19 16 13 10 9 13 12 18 8 22 5 20Z" fill="#38385c" /><path d="M5 19 8 22 12 18 9 15ZM17 14 20 16 23 13 21 10Z" fill="#58a0e8" /><path d="M4 9 8 6 10 9 6 12ZM13 8 17 5 18 8Z" fill="#a0a0cc" /></Icon></Tool>
      <Tool label="Numbers"><Icon><circle cx="7" cy="6" r="5" fill="#2828b0" /><path d="M7 3V4M7 5.500V9.500" stroke="#fff" strokeWidth="1.800" /><Bold x={4} y={22} size={9}>123</Bold></Icon></Tool>
      <Tool label="Measure"><Icon><path d="M3 16V23M3 20 21 10M21 7V14" stroke="#484880" strokeWidth="1.600" /><Bold x={1} y={14} size={7}>0</Bold><Bold x={19} y={7} size={7}>1</Bold><Bold x={10} y={22} size={7}>+10'</Bold></Icon></Tool>
      <button type="button" aria-label="Element handles" className={on}><Icon><Sheet x={0} y={0} s={0.55} /><Bold x={3} y={22} size={9}>ABC</Bold></Icon></button>
      <button type="button" aria-label="Load handles" className={on}><Icon><RedDown x={4} y={1} l={6} /><circle cx="4" cy="13" r="2" /><Bold x={3} y={22} size={9}>ABC</Bold></Icon></button>
      <Tool label="Reverse display"><Icon><path d="M1 8 14 6V11L1 13ZM7.500 7V12M10 15 23 13V18L10 20ZM16.500 14V19" fill="#9a9acc" stroke="#444470" /><RedDown x={4} y={0} l={3} /><RedDown x={20} y={16} l={3} /><path d="M17 4A3 3 0 0 1 22 4M22 8A3 3 0 0 1 17 8" fill="none" stroke="#555" strokeWidth="1.600" /></Icon></Tool>
      <Tool label="Surface points"><Icon><path d="M4 7C10 8 14 5 20 3V16C14 19 10 20 4 21Z" fill="url(#blue)" stroke="#222" />{([[4, 7], [20, 3], [20, 16], [4, 21]] as const).map(([x, y]) => <circle key={`${x}-${y}`} cx={x} cy={y} r="1.900" fill="#fff" stroke="#222" />)}</Icon></Tool>
    </div>
  );
}

/* ---------- lower toolbar ---------- */

function ToolSelect({ label, value, width, icon }: { label: string; value: string; width: string; icon: ReactNode }) {
  return (
    <div className={clsx('relative h-8 shrink-0 bg-white', width)}>
      <select aria-label={label} className="appearance-none size-full pl-[22px] text-[13px] outline-none font-['Liberation_Sans',Arial,sans-serif]">
        <option>{value}</option>
      </select>
      <span className="absolute left-0 top-1 pointer-events-none">{icon}</span>
      <span className="absolute right-0 top-0 h-full w-4 bg-[#f0f0f0] flex items-center justify-center pointer-events-none">
        <svg viewBox="0 0 8 5" className="w-2 h-[5px]"><path d="M0 0H8L4 5Z" /></svg>
      </span>
    </div>
  );
}

function DisplayToolbar() {
  return (
    <div className="h-[34px] mb-[7px] shrink-0 flex items-center pl-0.5">
      <Grip />
      <Tool label="Assemblies"><Icon><Folder /><Blocks /></Icon></Tool>
      <Tool label="Components"><Icon><Folder /><Gem x={14} y={17} s={1.8} /></Icon></Tool>
      <Tool label="Materials"><Icon><Folder /><path d="M10 22V12C10 8 18 8 20 12" fill="none" stroke="#e02020" strokeWidth="1.600" /><path d="M14 11H20V13L18 16 20 21H14L16 16Z" fill="#eee" stroke="#444" /></Icon></Tool>
      <Tool label="Properties"><Icon><Folder /><Gem x={14} y={17} s={1.7} gray /><Bold x={6} y={10} size={9}>t</Bold><path d="M3 12V22M1 15H5M1 19H5" stroke="#e02020" /></Icon></Tool>
      <Tool label="Load collectors"><Icon><Folder /><RedDown x={12} y={3} l={11} /><circle cx="12" cy="21" r="2" /><path d="M15 15H22V22H15Z" fill="#60c030" stroke="#246010" /><path d="M16 17.500H21M16 20H21" stroke="#246010" /></Icon></Tool>
      <Tool label="System collectors" caret><Icon><Folder /><path d="M12 5V14L6 19M12 14 17 17" stroke="#6868a8" strokeWidth="2" fill="none" /><path d="M15 15H22V22H15Z" fill="#60c030" stroke="#246010" /><path d="M16 17.500H21M16 20H21" stroke="#246010" /></Icon></Tool>
      <Sep />
      <Tool label="Delete"><Icon><path d="M6 3 12 9 18 3 21 6 15 12 21 19 17 21 12 15 6 21 3 18 9 12 3 6Z" fill="url(#red)" stroke="#a01010" strokeWidth=".8" /></Icon></Tool>
      <Tool label="Card edit"><Icon>{[0, 4, 8].map(d => <path key={d} d={`M${2 + d} ${5 + d / 2}C${6 + d} ${3 + d / 2} ${10 + d} ${1 + d / 2} ${13 + d} ${3 + d / 2}V${14 + d / 2}L${2 + d} ${17 + d / 2}Z`} fill="url(#gray)" stroke="#555" strokeWidth=".8" />)}</Icon></Tool>
      <Tool label="Organize"><Icon><Folder /><path d="M5 22 7 10 21 8 19 20Z" fill="url(#tan)" stroke="#b87a24" strokeWidth=".7" /><path d="M4 7C5 12 8 12 10 12V9L16 14 10 19V16C5 16 3 12 4 7Z" fill="#e83010" /></Icon></Tool>
      <Tool label="Renumber"><Icon><Bold x={11} y={8} size={8}>2</Bold><Bold x={8} y={15} size={8}>1</Bold><Bold x={11} y={22} size={8}>3</Bold><path d="M8 4C4 4 3 6 3 9M1 7 3 10 6 7M18 5C21 6 22 9 19 13M17 10 18 14 22 13" fill="none" stroke="#e02020" strokeWidth="1.400" /></Icon></Tool>
      <Grip />
      <ToolSelect label="Geometry color mode" value="Auto" width="w-[110px]" icon={<Icon><g transform="scale(.8)"><Curve /></g><Spectrum y={20} /></Icon>} />
      <Tool label="Wireframe geometry" caret><Icon><Curve fill="#fafafa" /></Icon></Tool>
      <Tool label="Shaded geometry" caret><Icon><Curve /></Icon></Tool>
      <Tool label="Transparency"><Icon><path d="M12 1 21 6V18L12 23 3 18V6Z" fill="#a4a4d8" stroke="#3a3a68" /><path d="M3 6 12 11 21 6M12 11V23" fill="none" stroke="#3a3a68" /><path d="M12 11 21 6V18L12 23Z" fill="#c4c4ec" opacity=".7" /></Icon></Tool>
      <Sep />
      <ToolSelect label="Element color mode" value="By Comp" width="w-[117px]" icon={<Icon><g transform="translate(1 0) scale(.8)"><GridCube fill="#7878b8" /></g><Spectrum y={20} /></Icon>} />
      <Tool label="Wireframe elements" caret><Icon><GridCube fill="#fff" /></Icon></Tool>
      <Tool label="Shaded elements" caret><Icon><GridCube fill="#8080c0" /></Icon></Tool>
      <Tool label="1D elements" caret><Icon><path d="M6 16 18 8" stroke="#333" strokeWidth="1.800" /></Icon></Tool>
      <Tool label="2D elements" caret><Icon><path d="M2 12 12 6 22 12 12 18Z" fill="#8c8c8c" stroke="#444" /><path d="M7 9 17 15M17 9 7 15" stroke="#333" /></Icon></Tool>
      <Tool label="3D elements" caret><Icon><path d="M12 4 22 10V14L12 20 2 14V10Z" fill="#3434d0" stroke="#1a1a90" /><path d="M12 4 22 10 12 16 2 10Z" fill="#a8bcff" stroke="#2020a0" /></Icon></Tool>
      <Tool label="Shrink"><Icon><path d="M5 8 10 7V12L5 13ZM5 16 10 15V20L5 21ZM13 5 18 3V9L13 10ZM13 13 18 12V17L13 18Z" fill="#7c7cb8" stroke="#3a3a68" /></Icon></Tool>
      <Tool label="Visualization"><Icon><rect x="2" y="3" width="20" height="14" fill="url(#screen)" stroke="#234" /><path d="M12 17V21M7 22H17" stroke="#222" strokeWidth="2.400" /></Icon></Tool>
      <Grip />
      <Tool label="Favorites"><Icon><path d="M12 2 15 9 22 10 17 15 18 22 12 18.500 6 22 7 15 2 10 9 9Z" fill="url(#gold)" stroke="#c08000" strokeWidth=".9" /></Icon></Tool>
      <Grip />
      <Tool label="Split view" caret><Icon><path d="M3 4 21 2V20L3 22Z" fill="#9a9ad4" stroke="#222" strokeWidth="1.400" /><path d="M12 3V21M3 13 21 11" stroke="#222" strokeWidth="1.400" /></Icon></Tool>
      <Tool label="Options"><Icon><path d="M3 22C1 20 2 18 4 17L13 8C12 4 15 1 19 2L16 5 19 8 22 5C23 9 20 12 16 11L7 20C6 23 4 23 3 22Z" fill="#f0f0f0" stroke="#555" strokeWidth="1.200" /></Icon></Tool>
      <Sep />
      <Tool label="Back"><Icon><FatArrow dir="l" /></Icon></Tool>
      <Tool label="Forward"><Icon><FatArrow dir="r" /></Icon></Tool>
      <Tool label="Reset position"><Icon><Swirl /></Icon></Tool>
      <Sep />
      <Tool label="Decrease"><Icon><path d="M5 12H19" stroke="#3c3c84" strokeWidth="2.400" /></Icon></Tool>
      <Tool label="Increase"><Icon><path d="M5 12H19M12 5V19" stroke="#3c3c84" strokeWidth="2.400" /></Icon></Tool>
      <Tool label="Reset value"><Icon><Swirl /></Icon></Tool>
      <Grip />
      <Tool label="Mesh lines" caret><Icon><Sheet fill="#a0a0c0" /></Icon></Tool>
    </div>
  );
}

/* ---------- automesh panel ---------- */

const bevel = 'h-[25px] border border-t-white border-l-white border-r-[#696969] border-b-[#696969] flex items-center justify-center';
const GREEN = 'bg-[#61c061] border-t-[#90dc90] border-l-[#90dc90] border-r-[#206820] border-b-[#206820]';

const DownArrow = () => <svg viewBox="0 0 12 7" className="w-3 h-[7px]"><path d="M0 0H12L6 7Z" /></svg>;
const UpDown = () => <svg viewBox="0 0 10 14" className="w-2.5 h-3.5" shapeRendering="crispEdges"><path d="M0 5 5 0 10 5ZM0 9H10L5 14Z" /><path d="M0 6.500H10V7.500H0Z" /></svg>;

function Toggle({ label, kind = 'updown', width = 'flex-1' }: { label: string; kind?: 'updown' | 'down'; width?: string }) {
  return (
    <div className="flex">
      <button type="button" aria-label={`Switch ${label}`} className={clsx(bevel, 'w-9')}>{kind === 'down' ? <DownArrow /> : <UpDown />}</button>
      <button type="button" className={clsx(bevel, width)}>{label}</button>
    </div>
  );
}

function Check({ label, checked }: { label: string; checked?: boolean }) {
  return (
    <label className="flex items-center gap-2.5">
      <span className="relative size-[18px]">
        <input type="checkbox" defaultChecked={checked} className="peer block appearance-none size-[18px] bg-white border border-t-[#696969] border-l-[#696969] border-r-[#e8e8e8] border-b-[#e8e8e8]" />
        <svg viewBox="0 0 18 18" className="absolute inset-0 hidden peer-checked:block pointer-events-none"><path d="M4 8 8 12 14 6" fill="none" stroke="#000" strokeWidth="2.400" /></svg>
      </span>
      {label}
    </label>
  );
}

const METHODS = ['size and bias', 'batchmesh/QI optimize', 'edge deviation', 'surface deviation', 'rigid body mesh'];

function AutomeshPanel() {
  return (
    <div className="shrink-0 ml-0.5 border-t border-[#8a8a8a] border-b border-b-black mb-[3px]">
      <div className="border-t border-white pt-5 pb-[9px] pr-4 flex justify-between font-['Noto_Sans',sans-serif] text-[17px] leading-[25px]">
        <div className="flex gap-9">
          <div className="w-[253px] shrink-0">
            <div className="flex">
              <button type="button" aria-label="Entity type" className={clsx(bevel, 'w-9')}><DownArrow /></button>
              <button type="button" className="flex-1 h-[25px] border-2 border-[#00f0ff] bg-[#e6e464] flex items-center justify-center">surfs</button>
              <button type="button" aria-label="Reset selection" className={clsx(bevel, 'w-9')}>
                <svg viewBox="0 0 14 14" className="size-3.5"><path d="M0 0H3V14H0ZM13 0V14L6 7Z" /></svg>
              </button>
            </div>
            {METHODS.map((m, i) => (
              <label key={m} className="flex items-center h-[25px] pl-3.5">
                <input
                  type="radio" name="method" defaultChecked={i === 0}
                  className="appearance-none size-2.5 mr-3.5 rounded-full bg-white border border-t-black border-l-black border-r-white border-b-white checked:bg-[radial-gradient(#000_30%,#fff_35%)]"
                />
                {m}
              </label>
            ))}
            <Toggle label="interactive" />
          </div>
          <div className="w-[378px] shrink-0">
            <div className="flex">
              <label htmlFor="size" className="w-[120px]">element size</label>
              <span>=</span>
              <input id="size" defaultValue="10.000" className="ml-auto w-[180px] h-[25px] bg-white border border-t-[#696969] border-l-[#696969] border-r-white border-b-white text-right pr-0.5" />
            </div>
            <div className="flex">
              <span className="flex-1">mesh type:</span>
              <button type="button" aria-label="Mesh type" className={clsx(bevel, 'w-9')}><DownArrow /></button>
              <button type="button" className={clsx(bevel, 'w-[180px] pl-0.5 pr-2')}>
                <svg viewBox="0 0 18 18" className="size-[18px]"><path d="M.500 .500H17.500V17.500H.500ZM9 0V18M0 9H18" fill="none" stroke="#000" /></svg>
                <span className="flex-1 text-center">quads only</span>
              </button>
            </div>
          </div>
          <div className="w-[432px] shrink-0">
            <div className="w-[288px]">
              <Toggle label="elems to surf comp" />
              <Toggle label="first order" />
              <Toggle label="keep connectivity" kind="down" />
            </div>
            <div className="mt-[25px] h-[25px] flex items-center">
              <span className="w-[63px]">map:</span>
              <div className="w-[90px]"><Check label="size" checked /></div>
              <Check label="skew" checked />
            </div>
            <div className="mt-[25px] h-[25px] flex items-center justify-between pl-[9px]">
              <Check label="link opposite edges with AR <" />
              <Toggle label="auto" width="w-[90px]" />
            </div>
          </div>
        </div>
        <div className="w-[120px] shrink-0 flex flex-col items-end">
          <button type="button" className={clsx(bevel, GREEN, 'w-[102px] pl-1')}>mesh</button>
          <button type="button" className={clsx(bevel, GREEN, 'w-[102px] pl-1')}>reject</button>
          <button type="button" className={clsx(bevel, GREEN, 'w-full mt-[50px] pl-1')}>unmeshed</button>
          <button type="button" className={clsx(bevel, GREEN, 'w-full pl-1')}>failed</button>
          <button type="button" className="w-[102px] h-[25px] border border-[#a04040] bg-[#c46464] p-px flex">
            <span className="flex-1 h-full border-2 border-[#4a1414] pl-1 flex items-center justify-center">return</span>
          </button>
        </div>
      </div>
    </div>
  );
}

export default function App() {
  return (
    <div className="h-screen flex flex-col bg-[#f0f0f0] text-black overflow-hidden">
      <Gradients />
      <MenuBar />
      <MainToolbar />
      <main className="flex-1 min-h-0 flex">
        <Browser />
        <section className="flex-1 min-w-0 mt-[3px] mr-px border-r border-black flex flex-col">
          <div className="flex-1 min-h-0 flex flex-col pt-[19px] pr-1.5 border-r-2 border-white">
            <div className="flex-1 min-h-0 flex">
              <SideToolbar />
              <Viewport />
            </div>
            <DisplayToolbar />
            <AutomeshPanel />
          </div>
        </section>
      </main>
      <footer className="h-2 shrink-0 pt-[3px] flex justify-end gap-0.5">
        {['w-[124px]', 'w-[124px]', 'w-[137px]', 'w-[137px]'].map((w, i) => (
          <span key={i} className={clsx('border-t border-l border-black', w)} />
        ))}
      </footer>
    </div>
  );
}
